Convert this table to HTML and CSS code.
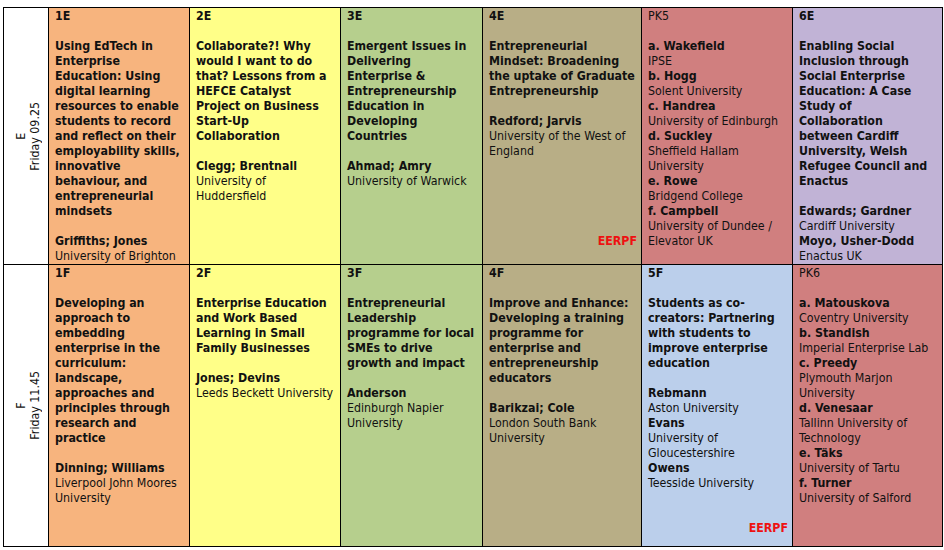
FILE: index.html
```html
<!DOCTYPE html>
<html lang="en">
<head>
<meta charset="utf-8">
<title>Conference programme – Friday sessions E and F</title>
<link rel="stylesheet" href="styles.css">
</head>
<body>
<table class="programme">
  <colgroup>
    <col class="col-slot">
    <col class="col-1">
    <col class="col-2">
    <col class="col-3">
    <col class="col-4">
    <col class="col-5">
    <col class="col-6">
  </colgroup>
  <tbody>
    <tr class="row-e">
      <th class="slot"><div class="slot-text">E<br>Friday 09.25</div></th>
      <td class="orange">
        <p class="code">1E</p>
        <p class="title">Using EdTech in<br>Enterprise<br>Education: Using<br>digital learning<br>resources to enable<br>students to record<br>and reflect on their<br>employability skills,<br>innovative<br>behaviour, and<br>entrepreneurial<br>mindsets</p>
        <p class="name">Griffiths; Jones</p>
        <p>University of Brighton</p>
      </td>
      <td class="yellow">
        <p class="code">2E</p>
        <p class="title">Collaborate?! Why<br>would I want to do<br>that? Lessons from a<br>HEFCE Catalyst<br>Project on Business<br>Start-Up<br>Collaboration</p>
        <p class="name">Clegg; Brentnall</p>
        <p>University of<br>Huddersfield</p>
      </td>
      <td class="green">
        <p class="code">3E</p>
        <p class="title">Emergent Issues in<br>Delivering<br>Enterprise &amp;<br>Entrepreneurship<br>Education in<br>Developing<br>Countries</p>
        <p class="name">Ahmad; Amry</p>
        <p>University of Warwick</p>
      </td>
      <td class="tan">
        <p class="code">4E</p>
        <p class="title">Entrepreneurial<br>Mindset: Broadening<br>the uptake of Graduate<br>Entrepreneurship</p>
        <p class="name">Redford; Jarvis</p>
        <p>University of the West of<br>England</p>
        <p class="tag tag-e">EERPF</p>
      </td>
      <td class="red">
        <p class="code plain">PK5</p>
        <p class="name">a. Wakefield</p>
        <p>IPSE</p>
        <p class="name">b. Hogg</p>
        <p>Solent University</p>
        <p class="name">c. Handrea</p>
        <p>University of Edinburgh</p>
        <p class="name">d. Suckley</p>
        <p>Sheffield Hallam<br>University</p>
        <p class="name">e. Rowe</p>
        <p>Bridgend College</p>
        <p class="name">f. Campbell</p>
        <p>University of Dundee /<br>Elevator UK</p>
      </td>
      <td class="purple">
        <p class="code">6E</p>
        <p class="title">Enabling Social<br>Inclusion through<br>Social Enterprise<br>Education: A Case<br>Study of<br>Collaboration<br>between Cardiff<br>University, Welsh<br>Refugee Council and<br>Enactus</p>
        <p class="name">Edwards; Gardner</p>
        <p>Cardiff University</p>
        <p class="name">Moyo, Usher-Dodd</p>
        <p>Enactus UK</p>
      </td>
    </tr>
    <tr class="row-f">
      <th class="slot"><div class="slot-text">F<br>Friday 11.45</div></th>
      <td class="orange">
        <p class="code">1F</p>
        <p class="title">Developing an<br>approach to<br>embedding<br>enterprise in the<br>curriculum:<br>landscape,<br>approaches and<br>principles through<br>research and<br>practice</p>
        <p class="name">Dinning; Williams</p>
        <p>Liverpool John Moores<br>University</p>
      </td>
      <td class="yellow">
        <p class="code">2F</p>
        <p class="title">Enterprise Education<br>and Work Based<br>Learning in Small<br>Family Businesses</p>
        <p class="name">Jones; Devins</p>
        <p>Leeds Beckett University</p>
      </td>
      <td class="green">
        <p class="code">3F</p>
        <p class="title">Entrepreneurial<br>Leadership<br>programme for local<br>SMEs to drive<br>growth and impact</p>
        <p class="name">Anderson</p>
        <p>Edinburgh Napier<br>University</p>
      </td>
      <td class="tan">
        <p class="code">4F</p>
        <p class="title">Improve and Enhance:<br>Developing a training<br>programme for<br>enterprise and<br>entrepreneurship<br>educators</p>
        <p class="name">Barikzai; Cole</p>
        <p>London South Bank<br>University</p>
      </td>
      <td class="blue">
        <p class="code">5F</p>
        <p class="title">Students as co-<br>creators: Partnering<br>with students to<br>improve enterprise<br>education</p>
        <p class="name">Rebmann</p>
        <p>Aston University</p>
        <p class="name">Evans</p>
        <p>University of<br>Gloucestershire</p>
        <p class="name">Owens</p>
        <p>Teesside University</p>
        <p class="tag tag-f">EERPF</p>
      </td>
      <td class="red">
        <p class="code plain">PK6</p>
        <p class="name">a. Matouskova</p>
        <p>Coventry University</p>
        <p class="name">b. Standish</p>
        <p>Imperial Enterprise Lab</p>
        <p class="name">c. Preedy</p>
        <p>Plymouth Marjon<br>University</p>
        <p class="name">d. Venesaar</p>
        <p>Tallinn University of<br>Technology</p>
        <p class="name">e. Täks</p>
        <p>University of Tartu</p>
        <p class="name">f. Turner</p>
        <p>University of Salford</p>
      </td>
    </tr>
  </tbody>
</table>
</body>
</html>
```

FILE: styles.css
```css
html, body {
  margin: 0;
  padding: 0;
  background: #ffffff;
}

body {
  font-family: "DejaVu Sans Condensed", "DejaVu Sans", "Liberation Sans", sans-serif;
  font-size: 12.3px;
  line-height: 15px;
  color: #111111;
}

.programme {
  margin: 7px 0 0 3px;
  border-collapse: collapse;
  table-layout: fixed;
  width: 939px;
  border: 1px solid #000000;
}

.col-slot { width: 45px; }
.col-1 { width: 141px; }
.col-2 { width: 151px; }
.col-3 { width: 142px; }
.col-4 { width: 159px; }
.col-5 { width: 151px; }
.col-6 { width: 150px; }

.row-e { height: 257px; }
.row-f { height: 282px; }

.programme th,
.programme td {
  border: 1px solid #000000;
  padding: 1px 4px 0 6px;
  vertical-align: top;
  text-align: left;
  white-space: nowrap;
  overflow: hidden;
}

.programme p {
  margin: 0;
}

.programme .slot {
  background: #ffffff;
  font-weight: normal;
  vertical-align: middle;
  padding: 0 0 0 3px;
}

.slot-text {
  writing-mode: vertical-rl;
  transform: rotate(180deg);
  text-align: center;
  line-height: 14px;
  margin: 0 auto;
}

.programme .code {
  font-weight: bold;
  margin-bottom: 15px;
}

.programme .code.plain {
  font-weight: normal;
}

.programme .title {
  font-weight: bold;
  margin-bottom: 15px;
}

.name {
  font-weight: bold;
}

.tag {
  font-weight: bold;
  color: #ee1111;
  text-align: right;
}

.programme .tag-e { margin-top: 75px; }
.programme .tag-f { margin-top: 30px; }

.orange { background: #f7b47e; }
.yellow { background: #ffff88; }
.green { background: #b6cf8d; }
.tan { background: #b8ae86; }
.red { background: #d07f7f; }
.purple { background: #c1b3d6; }
.blue { background: #bbcfeb; }
```
